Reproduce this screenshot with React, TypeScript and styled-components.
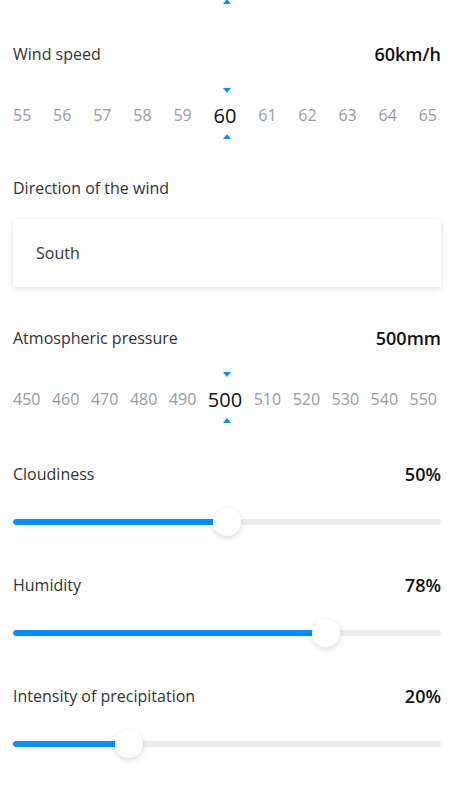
import styled, { createGlobalStyle } from "styled-components";

const GlobalStyle = createGlobalStyle`
    html, body {
        margin: 0;
        padding: 0;
        background: #ffffff;
    }
    body {
        font-family: 'Open Sans', 'Noto Sans', sans-serif;
        color: #333333;
    }
`;

const Page = styled.div`
    width: 456px;
    box-sizing: border-box;
    padding: 0 15px 40px 13px;
    display: flex;
    flex-direction: column;
`;

const Arrow = styled.div<{ $up?: boolean }>`
    align-self: center;
    width: 0;
    height: 0;
    border-left: 4px solid transparent;
    border-right: 4px solid transparent;
    ${({ $up }) => $up
        ? "border-bottom: 5px solid #0a8cff;"
        : "border-top: 5px solid #0a8cff;"}
`;

const TopArrow = styled(Arrow)`
    margin-top: -1px;
`;

const Section = styled.section<{ $gap: number }>`
    display: flex;
    flex-direction: column;
    margin-top: ${({ $gap }) => $gap}px;
`;

const Header = styled.div`
    display: flex;
    justify-content: space-between;
    align-items: center;
    height: 24px;
`;

const Label = styled.span`
    font-size: 16px;
    color: #333333;
`;

const Value = styled.span`
    font-size: 18px;
    font-weight: 600;
    color: #111111;
`;

const Picker = styled.div`
    display: flex;
    flex-direction: column;
    margin-top: 22px;
`;

const Numbers = styled.div`
    display: flex;
    justify-content: space-between;
    align-items: center;
    height: 30px;
    margin: 7px 0 4px;
    padding-right: 4px;
`;

const Num = styled.span<{ $active?: boolean }>`
    font-size: ${({ $active }) => ($active ? "20px" : "16px")};
    color: ${({ $active }) => ($active ? "#111111" : "#9a9a9a")};
`;

const Select = styled.div`
    margin-top: 19px;
    height: 68px;
    display: flex;
    align-items: center;
    padding: 0 23px;
    background: #ffffff;
    border-radius: 2px;
    box-shadow: 0 2px 6px rgba(0, 0, 0, 0.12);
    font-size: 16px;
    color: #333333;
`;

const SliderBox = styled.div`
    position: relative;
    height: 28px;
    margin-top: 22px;
    display: flex;
    align-items: center;
`;

const Track = styled.div`
    flex: 1;
    height: 6px;
    border-radius: 3px;
    background: #ebebeb;
    overflow: hidden;
`;

const Fill = styled.div`
    height: 100%;
    background: #0a8cff;
    border-radius: 3px 0 0 3px;
`;

const Thumb = styled.div`
    position: absolute;
    top: 0;
    width: 28px;
    height: 28px;
    margin-left: -14px;
    border-radius: 50%;
    background: #ffffff;
    box-shadow: 0 2px 6px rgba(0, 0, 0, 0.15);
`;

type PickerProps = { values: number[]; active: number };

const NumberPicker = ({ values, active }: PickerProps) => (
    <Picker>
        <Arrow />
        <Numbers>
            {values.map((v) => (
                <Num key={v} $active={v === active}>{v}</Num>
            ))}
        </Numbers>
        <Arrow $up />
    </Picker>
);

const Slider = ({ position }: { position: number }) => (
    <SliderBox>
        <Track>
            <Fill style={{ width: `${position}%` }} />
        </Track>
        <Thumb style={{ left: `${position}%` }} />
    </SliderBox>
);

const range = (from: number, step: number) =>
    Array.from({ length: 11 }, (_, i) => from + i * step);

const sliders = [
    { label: "Cloudiness", value: "50%", position: 50 },
    { label: "Humidity", value: "78%", position: 73.1 },
    { label: "Intensity of precipitation", value: "20%", position: 27.1 },
];

export default function App() {
    return (
        <Page>
            <GlobalStyle />
            <TopArrow $up />

            <Section $gap={38}>
                <Header>
                    <Label>Wind speed</Label>
                    <Value>60km/h</Value>
                </Header>
                <NumberPicker values={range(55, 1)} active={60} />
            </Section>

            <Section $gap={37}>
                <Header>
                    <Label>Direction of the wind</Label>
                </Header>
                <Select>South</Select>
            </Section>

            <Section $gap={39}>
                <Header>
                    <Label>Atmospheric pressure</Label>
                    <Value>500mm</Value>
                </Header>
                <NumberPicker values={range(450, 10)} active={500} />
            </Section>

            {sliders.map((s, i) => (
                <Section key={s.label} $gap={i === 0 ? 39 : 37}>
                    <Header>
                        <Label>{s.label}</Label>
                        <Value>{s.value}</Value>
                    </Header>
                    <Slider position={s.position} />
                </Section>
            ))}
        </Page>
    );
}
